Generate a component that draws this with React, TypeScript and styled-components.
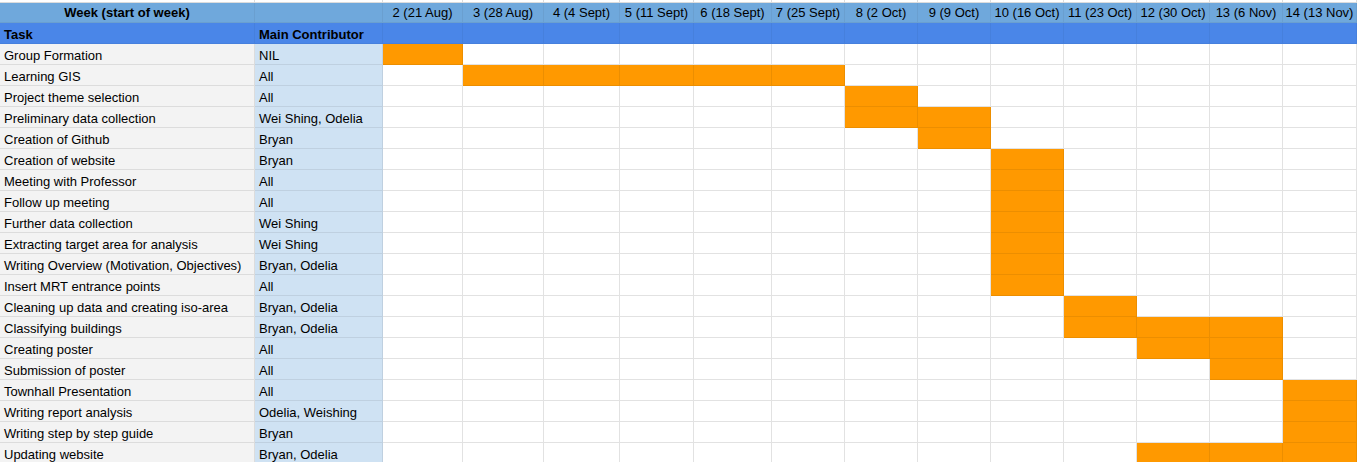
import React from "react";
import styled, { createGlobalStyle, css } from "styled-components";

const GlobalStyle = createGlobalStyle`
  html, body {
    margin: 0;
    padding: 0;
    background: #ffffff;
    overflow: hidden;
  }
  body {
    font-family: "Liberation Sans", Arial, sans-serif;
    font-size: 13px;
    color: #000000;
  }
`;

const WEEKS = [
  { label: "2 (21 Aug)", width: 80 },
  { label: "3 (28 Aug)", width: 81 },
  { label: "4 (4 Sept)", width: 76 },
  { label: "5 (11 Sept)", width: 74 },
  { label: "6 (18 Sept)", width: 78 },
  { label: "7 (25 Sept)", width: 73 },
  { label: "8 (2 Oct)", width: 73 },
  { label: "9 (9 Oct)", width: 73 },
  { label: "10 (16 Oct)", width: 73 },
  { label: "11 (23 Oct)", width: 73 },
  { label: "12 (30 Oct)", width: 73 },
  { label: "13 (6 Nov)", width: 73 },
  { label: "14 (13 Nov)", width: 74 },
];

type Task = { name: string; who: string; weeks: number[] };

const TASKS: Task[] = [
  { name: "Group Formation", who: "NIL", weeks: [0] },
  { name: "Learning GIS", who: "All", weeks: [1, 2, 3, 4, 5] },
  { name: "Project theme selection", who: "All", weeks: [6] },
  { name: "Preliminary data collection", who: "Wei Shing, Odelia", weeks: [6, 7] },
  { name: "Creation of Github", who: "Bryan", weeks: [7] },
  { name: "Creation of website", who: "Bryan", weeks: [8] },
  { name: "Meeting with Professor", who: "All", weeks: [8] },
  { name: "Follow up meeting", who: "All", weeks: [8] },
  { name: "Further data collection", who: "Wei Shing", weeks: [8] },
  { name: "Extracting target area for analysis", who: "Wei Shing", weeks: [8] },
  { name: "Writing Overview (Motivation, Objectives)", who: "Bryan, Odelia", weeks: [8] },
  { name: "Insert MRT entrance points", who: "All", weeks: [8] },
  { name: "Cleaning up data and creating iso-area", who: "Bryan, Odelia", weeks: [9] },
  { name: "Classifying buildings", who: "Bryan, Odelia", weeks: [9, 10, 11] },
  { name: "Creating poster", who: "All", weeks: [10, 11] },
  { name: "Submission of poster", who: "All", weeks: [11] },
  { name: "Townhall Presentation", who: "All", weeks: [12] },
  { name: "Writing report analysis", who: "Odelia, Weishing", weeks: [12] },
  { name: "Writing step by step guide", who: "Bryan", weeks: [12] },
  { name: "Updating website", who: "Bryan, Odelia", weeks: [10, 11, 12] },
];

const columns = ["255px", "128px", ...WEEKS.map((w) => `${w.width}px`)].join(" ");

const Sheet = styled.div`
  display: grid;
  grid-template-columns: ${columns};
  grid-auto-rows: 21px;
  width: 1357px;
`;

type Variant = "week" | "head" | "task" | "who" | "empty" | "bar";

const variants: Record<Variant, ReturnType<typeof css>> = {
  week: css`
    background: #6fa8dc;
    border-color: #6a9fd0;
    justify-content: center;
    padding: 0;
  `,
  head: css`
    background: #4a86e8;
    border-color: #4680dd;
    font-weight: bold;
  `,
  task: css`
    background: #f3f3f3;
    border-color: #dcdcdc;
  `,
  who: css`
    background: #cfe2f3;
    border-color: #bfd0e0;
  `,
  empty: css`
    background: #ffffff;
    border-color: #e2e2e2;
  `,
  bar: css`
    background: #ff9900;
    border-color: #ec8e00;
  `,
};

const Cell = styled.div<{ $v: Variant; $bold?: boolean }>`
  box-sizing: border-box;
  display: flex;
  align-items: center;
  padding: 2px 4px 0 4px;
  border-style: solid;
  border-width: 0 1px 1px 0;
  white-space: nowrap;
  overflow: hidden;
  line-height: 15px;
  font-weight: ${(p) => (p.$bold ? "bold" : "normal")};
  ${(p) => variants[p.$v]}
`;

const TopStrip = styled.div`
  box-sizing: border-box;
  height: 3px;
  background: #ffffff;
  border-style: solid;
  border-color: #dcdcdc;
  border-width: 0 1px 1px 0;
`;

const StripRow = styled.div`
  display: grid;
  grid-template-columns: ${columns};
  width: 1357px;
`;

const WeekRowSheet = styled(Sheet)`
  grid-auto-rows: 20px;
`;

export default function App() {
  return (
    <>
      <GlobalStyle />
      <StripRow>
        {Array.from({ length: 15 }).map((_, i) => (
          <TopStrip key={i} />
        ))}
      </StripRow>
      <WeekRowSheet>
        <Cell $v="week" $bold>
          Week (start of week)
        </Cell>
        <Cell $v="week" />
        {WEEKS.map((w) => (
          <Cell key={w.label} $v="week">
            {w.label}
          </Cell>
        ))}
      </WeekRowSheet>
      <Sheet>
        <Cell $v="head">Task</Cell>
        <Cell $v="head">Main Contributor</Cell>
        {WEEKS.map((w) => (
          <Cell key={w.label} $v="head" />
        ))}
        {TASKS.map((t) => (
          <React.Fragment key={t.name}>
            <Cell $v="task">{t.name}</Cell>
            <Cell $v="who">{t.who}</Cell>
            {WEEKS.map((w, i) => (
              <Cell key={w.label} $v={t.weeks.includes(i) ? "bar" : "empty"} />
            ))}
          </React.Fragment>
        ))}
      </Sheet>
    </>
  );
}
